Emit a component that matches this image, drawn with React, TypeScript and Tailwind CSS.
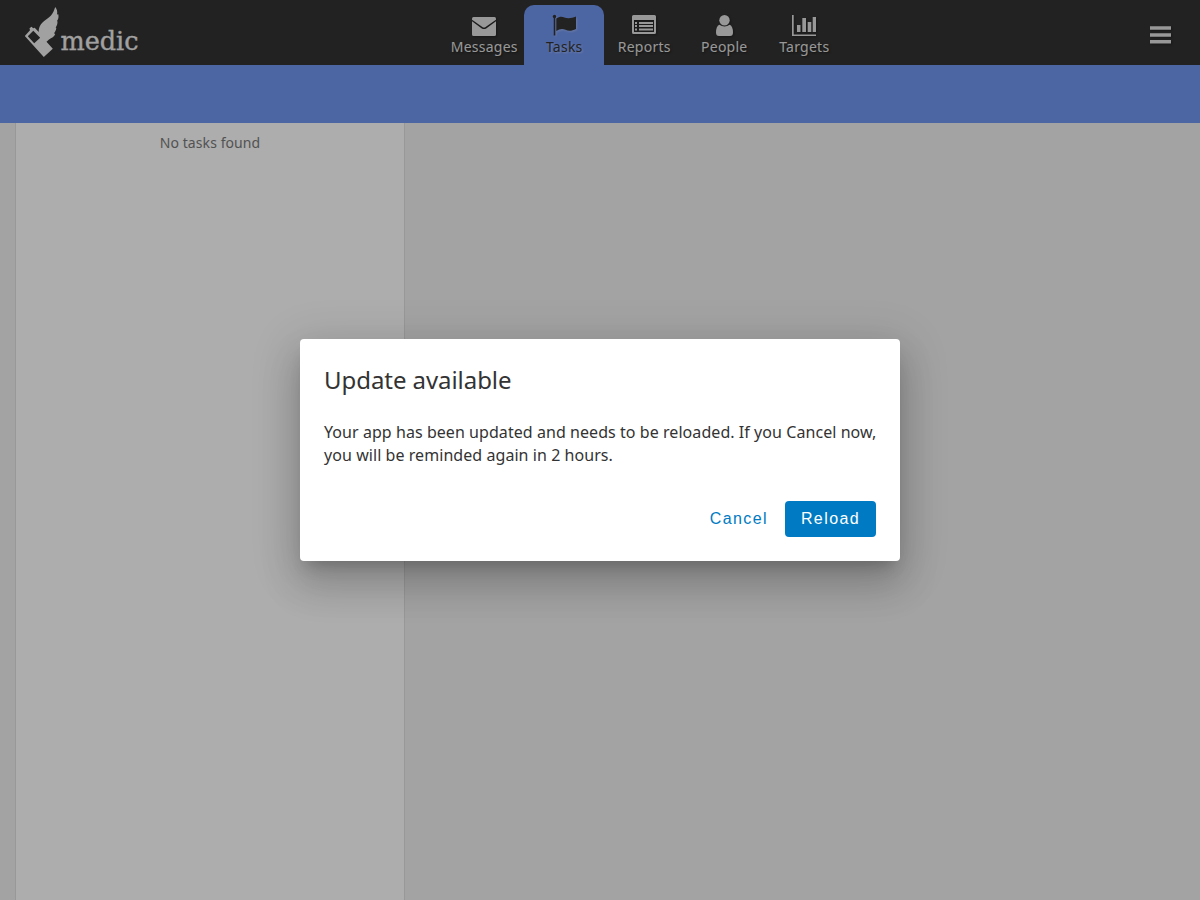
import type { ReactNode } from 'react';

const tabs: { label: string; active?: boolean; icon: ReactNode }[] = [
  {
    label: 'Messages',
    icon: (
      <>
        <path d="M1.500 4H22.500Q24 4 24 5.500V6.800L13.600 14.100Q12 15.100 10.400 14.100L0 6.800V5.500Q0 4 1.500 4Z" />
        <path d="M0 8.200L9.800 15.400Q12 16.800 14.200 15.400L24 8.200V21.500Q24 23 22.500 23H1.500Q0 23 0 21.500Z" />
      </>
    ),
  },
  {
    label: 'Tasks',
    active: true,
    icon: (
      <>
        <circle cx="2.500" cy="3.500" r="1.700" />
        <path d="M1.700 3.500H3.300V22.500H1.700Z" />
        <path d="M4.300 5.500C7 3.600 9.700 3.300 12.500 4.400C16 5.800 19.500 5.200 24 3.500V16C20 18 16.500 18.300 13.500 16.800C10.500 15.400 7.500 15.800 4.300 18Z" />
      </>
    ),
  },
  {
    label: 'Reports',
    icon: (
      <path
        fillRule="evenodd"
        d="M1.500 2H22.500Q24 2 24 3.500V19.500Q24 21 22.500 21H1.500Q0 21 0 19.500V3.500Q0 2 1.500 2ZM2 7V19H22V7ZM3 9H5V11H3ZM7 9H21V11H7ZM3 12H5V14H3ZM7 12H21V14H7ZM3 15.500H5V17.500H3ZM7 15.500H21V17.500H7Z"
      />
    ),
  },
  {
    label: 'People',
    icon: (
      <>
        <ellipse cx="12.500" cy="7.200" rx="5.200" ry="5.200" />
        <path d="M7.300 11.800Q12.500 15.400 17.700 11.800Q21 13.500 21 19.500Q21 23 18 23H7Q4 23 4 19.500Q4 13.500 7.300 11.800Z" />
      </>
    ),
  },
  {
    label: 'Targets',
    icon: (
      <path d="M0 2H1.700V21.500H24V23H0ZM5 12H8.500V19H5ZM10.300 5H14V19H10.300ZM15.700 9H19.300V19H15.700ZM20.700 4H24V19H20.700Z" />
    ),
  },
];

function Logo() {
  return (
    <svg viewBox="20 0 125 65" className="ml-5 h-[65px] w-[125px] shrink-0 fill-[#ededed]">
      <path
        fillRule="evenodd"
        d="M55.200 7C57 9 57.700 12 57 14.500L58.300 14.200C58.800 17 58.500 19 57 21L57.500 21.500C57.500 24 57 25.500 55.700 27.500L56.300 28C56 30.500 55 32 54 33.200L55.200 34C54.500 36.500 51.500 38 49 39.500L46.500 41.800L52.800 48.700L43.800 57L24.800 36L30 30.200L29.500 28.200L31.500 26.800L33.200 28.300L34.700 27.800L38.700 32C38.500 28 39.800 25 43 22C46 19.500 48.500 18.200 51 15.500C53.200 13 54.200 10 55.200 7ZM33.300 30.800L27.800 36.300L34.200 43.200L40.200 37.800Z"
      />
      <text
        x="60.500"
        y="49.700"
        textLength="78"
        lengthAdjust="spacingAndGlyphs"
        className="fill-[#ededed] stroke-[#ededed] font-['DejaVu_Serif',serif] text-[26px] [stroke-width:0.3px]"
      >
        medic
      </text>
    </svg>
  );
}

export default function App() {
  return (
    <div className="relative flex h-[900px] w-[1200px] flex-col overflow-hidden bg-[#f0f0f0] font-['Noto_Sans',sans-serif] text-[14px] text-[#333333]">
      <header className="flex h-[65px] shrink-0 bg-[#333333] text-[#e0e0e0]">
        <Logo />
        <nav className="ml-[299px] mt-[5px] flex h-[60px]">
          {tabs.map(({ label, active, icon }) => (
            <a
              key={label}
              className={
                active
                  ? 'flex w-20 flex-col items-center rounded-t-[10px] bg-[#7095f0] pt-2 text-[#333333] [text-shadow:1px_1px_2px_rgba(255,255,255,0.4)]'
                  : 'flex w-20 flex-col items-center pt-2 [text-shadow:1px_1px_2px_rgba(0,0,0,0.5)]'
              }
            >
              <svg
                viewBox="0 0 24 24"
                className={
                  active
                    ? 'block h-6 w-6 fill-current drop-shadow-[1px_1px_1px_rgba(255,255,255,0.3)]'
                    : 'block h-6 w-6 fill-current drop-shadow-[1px_1px_1px_rgba(0,0,0,0.35)]'
                }
              >
                {icon}
              </svg>
              <span className="pl-[0.5px] text-[14px] leading-5 tracking-[0.25px]">{label}</span>
            </a>
          ))}
        </nav>
        <button aria-label="Menu" className="ml-auto mr-[29px] flex items-center pt-[5px]">
          <svg
            viewBox="0 0 21 18"
            className="h-[18px] w-[21px] fill-current drop-shadow-[1px_1px_1px_rgba(0,0,0,0.35)]"
          >
            <path d="M0 0.300H21V3.800H0ZM0 7.200H21V10.700H0ZM0 14.100H21V17.600H0Z" />
          </svg>
        </button>
      </header>
      <div className="h-[58px] shrink-0 bg-[#7095f0]" />
      <main className="flex flex-1">
        <section className="ml-[15px] w-[390px] border-x border-[#e0e0e0] bg-white pt-[10px] text-center leading-5 tracking-[0.08px] text-[#7a7a7a]">
          No tasks found
        </section>
      </main>

      <div className="absolute inset-0 flex items-center justify-center bg-black/32">
        <div
          role="dialog"
          className="flex h-[222px] w-[600px] flex-col rounded bg-white px-6 pb-6 pt-[25px] shadow-[0_11px_15px_-7px_rgba(0,0,0,0.2),0_24px_38px_3px_rgba(0,0,0,0.14),0_9px_46px_8px_rgba(0,0,0,0.12)]"
        >
          <h2 className="text-[24px] leading-8 tracking-[-0.06px]">Update available</h2>
          <p className="-mr-1 mt-[25px] text-[16px] leading-[23px] tracking-[0.06px]">
            Your app has been updated and needs to be reloaded. If you Cancel now, you will be reminded again in 2
            hours.
          </p>
          <div className="mt-auto flex justify-end gap-px font-['Liberation_Sans',sans-serif] text-[16px] tracking-[1.420px]">
            <button className="h-9 rounded px-4 text-[#007bc3]">Cancel</button>
            <button className="h-9 w-[91px] rounded bg-[#007bc3] text-white">Reload</button>
          </div>
        </div>
      </div>
    </div>
  );
}
